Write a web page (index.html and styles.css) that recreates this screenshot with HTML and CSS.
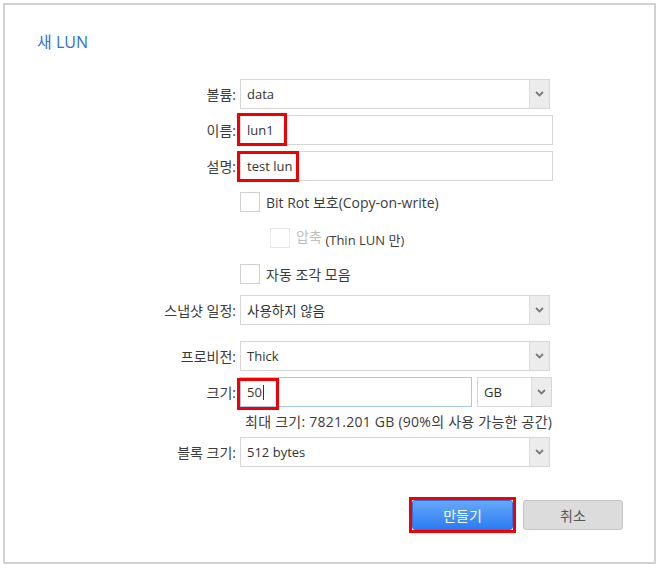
FILE: index.html
```html
<!DOCTYPE html>
<html lang="ko">
<head>
<meta charset="utf-8">
<title>새 LUN</title>
<link rel="stylesheet" href="styles.css">
</head>
<body>
<div class="frame">
  <div class="title">새 LUN</div>
  <div class="form">
    <div class="row">
      <div class="lbl">볼륨:</div>
      <div class="select w-sel"><span class="val">data</span><span class="arrow"><svg width="9" height="6" viewBox="0 0 9 6"><polyline points="1,1 4.5,4.5 8,1" fill="none" stroke="#7a7a7a" stroke-width="1.8"/></svg></span></div>
    </div>
    <div class="row">
      <div class="lbl">이름:</div>
      <div class="field w-inp"><span class="val">lun1</span><span class="mark mark-name"></span></div>
    </div>
    <div class="row">
      <div class="lbl">설명:</div>
      <div class="field w-inp"><span class="val">test lun</span><span class="mark mark-desc"></span></div>
    </div>
    <div class="row">
      <div class="lbl"></div>
      <div class="check"><span class="box"></span><span class="ctext">Bit Rot 보호(Copy-on-write)</span></div>
    </div>
    <div class="row">
      <div class="lbl"></div>
      <div class="check indent"><span class="box disabled"></span><span class="ctext"><span class="dim">압축</span> <span class="small">(Thin LUN 만)</span></span></div>
    </div>
    <div class="row">
      <div class="lbl"></div>
      <div class="check"><span class="box"></span><span class="ctext">자동 조각 모음</span></div>
    </div>
    <div class="row gap-after">
      <div class="lbl">스냅샷 일정:</div>
      <div class="select w-sel"><span class="val ko">사용하지 않음</span><span class="arrow"><svg width="9" height="6" viewBox="0 0 9 6"><polyline points="1,1 4.5,4.5 8,1" fill="none" stroke="#7a7a7a" stroke-width="1.8"/></svg></span></div>
    </div>
    <div class="row">
      <div class="lbl">프로비전:</div>
      <div class="select w-sel"><span class="val">Thick</span><span class="arrow"><svg width="9" height="6" viewBox="0 0 9 6"><polyline points="1,1 4.5,4.5 8,1" fill="none" stroke="#7a7a7a" stroke-width="1.8"/></svg></span></div>
    </div>
    <div class="row tight">
      <div class="lbl">크기:</div>
      <div class="size-group">
        <div class="field focus w-size"><span class="val">50<span class="caret"></span></span><span class="mark mark-size"></span></div>
        <div class="select w-unit"><span class="val">GB</span><span class="arrow"><svg width="9" height="6" viewBox="0 0 9 6"><polyline points="1,1 4.5,4.5 8,1" fill="none" stroke="#7a7a7a" stroke-width="1.8"/></svg></span></div>
      </div>
    </div>
    <div class="hint">최대 크기: 7821.201 GB (90%의 사용 가능한 공간)</div>
    <div class="row">
      <div class="lbl">블록 크기:</div>
      <div class="select w-sel"><span class="val">512 bytes</span><span class="arrow"><svg width="9" height="6" viewBox="0 0 9 6"><polyline points="1,1 4.5,4.5 8,1" fill="none" stroke="#7a7a7a" stroke-width="1.8"/></svg></span></div>
    </div>
  </div>
  <div class="actions">
    <span class="btn-mark"><button class="btn primary">만들기</button></span>
    <button class="btn">취소</button>
  </div>
</div>
</body>
</html>
```
FILE: styles.css
```css
html, body {
  margin: 0;
  padding: 0;
  background: #ffffff;
}
body {
  font-family: "Open Sans", "Noto Sans CJK KR", sans-serif;
  font-size: 13px;
  color: #444;
}
.frame {
  margin: 3px 0 0 3px;
  width: 653px;
  height: 561px;
  box-sizing: border-box;
  border: 2px solid #d2d2d2;
  background: #fff;
}
.title {
  padding: 27px 0 0 32px;
  font-size: 16px;
  line-height: 20px;
  color: #2f6fd8;
}
.form {
  margin-top: 27px;
}
.row {
  display: flex;
  align-items: center;
  height: 30px;
  margin-bottom: 6px;
}
.row.gap-after {
  margin-bottom: 16px;
}
.row.tight {
  margin-bottom: 0;
}
.lbl {
  width: 231px;
  padding-right: 4px;
  text-align: right;
  color: #3c3c3c;
  font-size: 14px;
  white-space: nowrap;
}
.field, .select {
  position: relative;
  height: 30px;
  box-sizing: border-box;
  border: 1px solid #d6d6d6;
  background: #fff;
  display: flex;
  align-items: center;
  color: #333;
}
.val {
  padding-left: 6px;
  flex: 1;
  white-space: nowrap;
}
.val.ko {
  font-size: 13.5px;
}
.w-sel { width: 310px; }
.w-inp { width: 313px; }
.size-group {
  display: flex;
  gap: 5px;
}
.w-size { width: 232px; }
.w-unit { width: 75px; }
.field.focus {
  border-color: #a9c8ee;
}
.caret {
  display: inline-block;
  width: 1px;
  height: 15px;
  background: #333;
  vertical-align: -3px;
  margin-left: 1px;
}
.arrow {
  width: 19px;
  height: 100%;
  background: #ececec;
  border-left: 1px solid #dcdcdc;
  display: flex;
  align-items: center;
  justify-content: center;
}
.mark {
  position: absolute;
  top: -3px;
  left: -4px;
  height: 33px;
  box-sizing: border-box;
  border: 3px solid #f00000;
}
.mark-name { width: 50px; }
.mark-desc { width: 62px; top: -1px; height: 31px; }
.mark-size { width: 42px; top: 0; height: 32px; }
.check {
  display: flex;
  align-items: center;
}
.check.indent {
  margin-left: 30px;
}
.box {
  width: 20px;
  height: 20px;
  box-sizing: border-box;
  border: 1px solid #d0d0d0;
  background: #fff;
  margin-right: 6px;
}
.box.disabled {
  border-color: #e8e8e8;
}
.ctext {
  color: #3c3c3c;
  font-size: 14px;
}
.dim {
  color: #bdbdbd;
  position: relative;
  top: -2px;
}
.small {
  font-size: 13px;
  position: relative;
  top: 1px;
}
.hint {
  margin-left: 240px;
  padding-top: 5px;
  line-height: 20px;
  height: 25px;
  color: #3c3c3c;
  font-size: 14px;
  letter-spacing: 0.25px;
  white-space: nowrap;
}
.actions {
  display: flex;
  justify-content: flex-end;
  align-items: center;
  gap: 7px;
  margin-top: 30px;
  padding-right: 31px;
}
.btn-mark {
  display: flex;
  border: 3px solid #f00000;
}
.btn {
  width: 100px;
  height: 30px;
  box-sizing: border-box;
  border: 1px solid #c4c4c4;
  border-radius: 3px;
  background: #dcdcdc;
  color: #555;
  font-family: "Open Sans", "Noto Sans CJK KR", sans-serif;
  font-size: 14px;
  padding: 0;
}
.btn.primary {
  width: 101px;
  border-color: #2b74e6;
  background: linear-gradient(#66a8f8, #2c7cf2);
  color: #fff;
}
```
